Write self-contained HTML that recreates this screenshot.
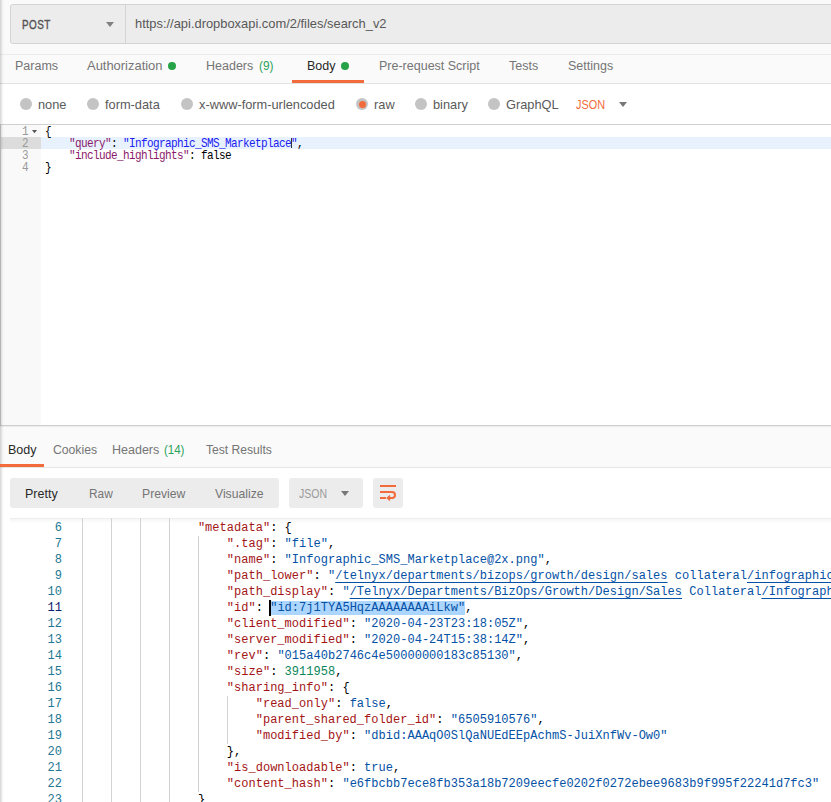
<!DOCTYPE html>
<html><head><meta charset="utf-8">
<style>
*{margin:0;padding:0;box-sizing:border-box}
html,body{width:831px;height:802px;overflow:hidden;background:#fafafa}
body{position:relative;font-family:"Liberation Sans",sans-serif;font-size:12.5px;color:#757575}
.a{position:absolute;white-space:pre}
.t{position:absolute;white-space:pre;line-height:16px;height:16px}
.strip{position:absolute;left:0;top:0;width:5px;height:802px;background:linear-gradient(90deg,rgba(0,0,0,.14) 0.5px,rgba(0,0,0,.085) 1.5px,rgba(0,0,0,.04) 2.5px,rgba(0,0,0,.012) 3.5px,rgba(0,0,0,0) 4.5px)}
.hl{position:absolute;height:1px}
.dot{position:absolute;width:8px;height:8px;border-radius:50%;background:#26a347}
.radio{position:absolute;width:12px;height:12px;border-radius:50%;background:#c4c4c4;top:98.3px}
.tri{position:absolute;width:0;height:0;border-left:4px solid transparent;border-right:4px solid transparent;border-top:5px solid #777}
.code{font-family:"Liberation Mono",monospace}
.req{position:absolute;left:0;font-size:11px;letter-spacing:-0.6px;line-height:12px;height:12px;white-space:pre;margin-top:1px;transform:scaleY(1.13);transform-origin:0 9.5px}
.rs{position:absolute;font-family:"Liberation Mono",monospace;font-size:12px;line-height:16px;height:16px;white-space:pre;color:#000}
.k{color:#a31515}.s{color:#0451a5}.n{color:#098658}.b{color:#0451a5}
.ln{position:absolute;font-family:"Liberation Mono",monospace;font-size:12px;line-height:16px;height:16px;width:52px;text-align:right;color:#237893}
.g{position:absolute;width:1px;background:#d3d3d3}
.u{text-decoration:underline;text-underline-offset:2.5px}
.sel{background:#add6ff}
.act{color:#0b216f}
.rs{letter-spacing:0.024px}
</style></head><body>
<!-- top url bar -->
<div class="a" style="left:10px;top:4px;width:830px;height:40px;border:1px solid #d4d4d4;border-radius:3px;background:#ececec"></div>
<div class="a" style="left:125px;top:5px;width:1px;height:38px;background:#d4d4d4"></div>
<div class="a" style="left:22px;top:17px;color:#555;font-size:12.4px;line-height:16px;letter-spacing:0.6px;-webkit-text-stroke:0.4px #555;transform:scaleX(0.8);transform-origin:0 0">POST</div>
<div class="tri" style="left:106px;top:22px;border-top-color:#808080"></div>
<div class="a" style="left:135px;top:16px;color:#585858;font-size:12.9px;line-height:16px">https://api.dropboxapi.com/2/files/search_v2</div>
<div class="hl" style="left:0;top:54px;width:831px;background:#ebebeb"></div>
<!-- tabs -->
<div class="a" style="left:15px;top:58px;line-height:16px">Params</div>
<div class="a" style="left:87px;top:58px;line-height:16px;font-size:12.95px">Authorization</div>
<div class="dot" style="left:168px;top:62px"></div>
<div class="a" style="left:206px;top:58px;line-height:16px">Headers</div><div class="a" style="left:258.5px;top:58px;line-height:16px;color:#2ba35a;transform:scaleX(0.95);transform-origin:0 0">(9)</div>
<div class="a" style="left:307px;top:58px;line-height:16px;color:#282828">Body</div>
<div class="dot" style="left:341px;top:62px"></div>
<div class="a" style="left:379px;top:58px;line-height:16px">Pre-request Script</div>
<div class="a" style="left:509px;top:58px;line-height:16px">Tests</div>
<div class="a" style="left:568px;top:58px;line-height:16px">Settings</div>
<div class="a" style="left:292px;top:80px;width:72px;height:3px;background:#f26b3a"></div>
<div class="hl" style="left:0;top:83px;width:831px;background:#e2e2e2"></div>
<!-- radios row -->
<div class="a" style="left:0;top:84px;width:831px;height:40px;background:#fff"></div>
<div class="radio" style="left:20px"></div><div class="a" style="left:38px;top:97px;line-height:16px;color:#5a5a5a;font-size:12.8px">none</div>
<div class="radio" style="left:87px"></div><div class="a" style="left:105px;top:97px;line-height:16px;color:#5a5a5a;font-size:12.8px">form-data</div>
<div class="radio" style="left:181px"></div><div class="a" style="left:199px;top:97px;line-height:16px;color:#5a5a5a;font-size:12.8px">x-www-form-urlencoded</div>
<div class="radio" style="left:356px"></div><div class="a" style="left:362px;top:104px"></div>
<div class="a" style="left:359px;top:101.2px;width:7px;height:7px;border-radius:50%;background:#f26b3a"></div>
<div class="a" style="left:374px;top:97px;line-height:16px;color:#5a5a5a;font-size:12.8px">raw</div>
<div class="radio" style="left:415px"></div><div class="a" style="left:433px;top:97px;line-height:16px;color:#5a5a5a;font-size:12.8px">binary</div>
<div class="radio" style="left:488px"></div><div class="a" style="left:506px;top:97px;line-height:16px;color:#5a5a5a;font-size:12.8px">GraphQL</div>
<div class="a" style="left:576px;top:97px;line-height:16px;color:#f26b3a;transform:scaleX(0.87);transform-origin:0 0">JSON</div>
<div class="tri" style="left:619px;top:102px"></div>
<!-- request editor -->
<div class="hl" style="left:0;top:124px;width:831px;background:#d0d0d0"></div>
<div class="a" style="left:0;top:125px;width:831px;height:300px;background:#fff"></div>
<div class="a" style="left:0;top:125px;width:41px;height:300px;background:#f9f9f9"></div>
<div class="a" style="left:41px;top:137px;width:790px;height:12px;background:#e8f2fe"></div>
<div class="a" style="left:1px;top:137px;width:40px;height:12px;background:#dcdcdc"></div>
<div class="req code" style="top:125px;left:0;width:28px;text-align:right;color:#999">1</div>
<svg class="a" style="left:31px;top:129px" width="8" height="6"><polygon points="1,1 6,1 3.5,4.2" fill="#555"/></svg>
<div class="req code" style="top:137px;left:0;width:28px;text-align:right;color:#999">2</div>
<div class="req code" style="top:149px;left:0;width:28px;text-align:right;color:#999">3</div>
<div class="req code" style="top:161px;left:0;width:28px;text-align:right;color:#999">4</div>
<div class="req code" style="top:125px;left:45px;color:#000">{</div>
<div class="req code" style="top:137px;left:45px;color:#000">    <span style="color:#8b1a6b">"query"</span>: <span style="color:#2020f0">"Infographic_SMS_Marketplace"</span>,</div>
<div class="req code" style="top:149px;left:45px;color:#000">    <span style="color:#8b1a6b">"include_highlights"</span>: false</div>
<div class="req code" style="top:161px;left:45px;color:#000">}</div>
<div class="a" style="left:291px;top:138px;width:1px;height:10px;background:#333"></div>
<div class="hl" style="left:0;top:425px;width:831px;background:#cfcfcf"></div>
<div class="hl" style="left:0;top:426px;width:831px;background:#ececec"></div>
<!-- response tabs -->
<div class="a" style="left:8px;top:442px;line-height:16px;color:#282828">Body</div>
<div class="a" style="left:53px;top:442px;line-height:16px;font-size:12.2px">Cookies</div>
<div class="a" style="left:112px;top:442px;line-height:16px">Headers</div><div class="a" style="left:164px;top:442px;line-height:16px;color:#2ba35a;transform:scaleX(0.92);transform-origin:0 0">(14)</div>
<div class="a" style="left:206px;top:442px;line-height:16px;font-size:12.1px">Test Results</div>

<div class="hl" style="left:0;top:467px;width:831px;background:#e6e6e6"></div>
<div class="a" style="left:0;top:468px;width:831px;height:334px;background:#fff"></div>
<!-- response toolbar -->
<div class="a" style="left:10px;top:478px;width:269px;height:30px;border-radius:3px;background:#ececec"></div>
<div class="a" style="left:25px;top:486px;line-height:16px;color:#282828">Pretty</div>
<div class="a" style="left:88.5px;top:486px;line-height:16px;transform:scaleX(0.95);transform-origin:0 0">Raw</div>
<div class="a" style="left:142px;top:486px;line-height:16px;font-size:12.2px">Preview</div>
<div class="a" style="left:215px;top:486px;line-height:16px;font-size:12.2px">Visualize</div>
<div class="a" style="left:289px;top:478px;width:74px;height:30px;border-radius:3px;background:#ececec"></div>
<div class="a" style="left:299px;top:486px;line-height:16px;color:#9a9a9a;transform:scaleX(0.84);transform-origin:0 0">JSON</div>
<div class="tri" style="left:341px;top:491px"></div>
<div class="a" style="left:373px;top:478px;width:30px;height:30px;border-radius:3px;background:#ececec"></div>
<svg class="a" style="left:373px;top:478px" width="30" height="30" viewBox="0 0 30 30"><g fill="none" stroke="#f26b3a" stroke-width="2"><path d="M7 8h16M7 14h12a3 3 0 0 1 0 6h-4M7 20h6"/><path d="M17 17.5l-2.5 2.5 2.5 2.5" stroke-width="1.6"/></g></svg>
<!-- response content -->
<div class="hl" style="left:10px;top:518px;width:821px;background:#eeeeee"></div>
<div class="a" style="left:10px;top:519px;width:821px;height:4px;background:linear-gradient(#f6f6f6,#fefefe)"></div>
<div id="resp"><div class="g" style="left:82.3px;top:518.0px;height:289.5px"></div>
<div class="g" style="left:111.2px;top:518.0px;height:289.5px"></div>
<div class="g" style="left:140.1px;top:518.0px;height:289.5px"></div>
<div class="g" style="left:169.0px;top:518.0px;height:289.5px"></div>
<div class="g" style="left:197.9px;top:535.5px;height:256px"></div>
<div class="g" style="left:226.8px;top:695.5px;height:48px"></div>
<div class="ln" style="left:10px;top:519.5px">6</div>
<div class="rs" style="left:197.9px;top:519.5px"><span class="k">"metadata"</span>: {</div>
<div class="ln" style="left:10px;top:535.5px">7</div>
<div class="rs" style="left:226.8px;top:535.5px"><span class="k">".tag"</span>: <span class="s">"file"</span>,</div>
<div class="ln" style="left:10px;top:551.5px">8</div>
<div class="rs" style="left:226.8px;top:551.5px"><span class="k">"name"</span>: <span class="s">"Infographic_SMS_Marketplace@2x.png"</span>,</div>
<div class="ln" style="left:10px;top:567.5px">9</div>
<div class="rs" style="left:226.8px;top:567.5px"><span class="k">"path_lower"</span>: <span class="s">"<span class="u">/telnyx/departments/bizops/growth/design/sales</span> collateral<span class="u">/infographics/sms_marketplace</span>"</span></div>
<div class="ln" style="left:10px;top:583.5px">10</div>
<div class="rs" style="left:226.8px;top:583.5px"><span class="k">"path_display"</span>: <span class="s">"<span class="u">/Telnyx/Departments/BizOps/Growth/Design/Sales</span> Collateral<span class="u">/Infographics/SMS_Marketplace</span>"</span></div>
<div class="ln act" style="left:10px;top:599.5px">11</div>
<div class="rs" style="left:226.8px;top:599.5px"><span class="k">"id"</span>: <span class="sel"><span class="s">"id:7j1TYA5HqzAAAAAAAAiLkw"</span></span>,</div>
<div class="ln" style="left:10px;top:615.5px">12</div>
<div class="rs" style="left:226.8px;top:615.5px"><span class="k">"client_modified"</span>: <span class="s">"2020-04-23T23:18:05Z"</span>,</div>
<div class="ln" style="left:10px;top:631.5px">13</div>
<div class="rs" style="left:226.8px;top:631.5px"><span class="k">"server_modified"</span>: <span class="s">"2020-04-24T15:38:14Z"</span>,</div>
<div class="ln" style="left:10px;top:647.5px">14</div>
<div class="rs" style="left:226.8px;top:647.5px"><span class="k">"rev"</span>: <span class="s">"015a40b2746c4e50000000183c85130"</span>,</div>
<div class="ln" style="left:10px;top:663.5px">15</div>
<div class="rs" style="left:226.8px;top:663.5px"><span class="k">"size"</span>: <span class="n">3911958</span>,</div>
<div class="ln" style="left:10px;top:679.5px">16</div>
<div class="rs" style="left:226.8px;top:679.5px"><span class="k">"sharing_info"</span>: {</div>
<div class="ln" style="left:10px;top:695.5px">17</div>
<div class="rs" style="left:255.7px;top:695.5px"><span class="k">"read_only"</span>: <span class="s">false</span>,</div>
<div class="ln" style="left:10px;top:711.5px">18</div>
<div class="rs" style="left:255.7px;top:711.5px"><span class="k">"parent_shared_folder_id"</span>: <span class="s">"6505910576"</span>,</div>
<div class="ln" style="left:10px;top:727.5px">19</div>
<div class="rs" style="left:255.7px;top:727.5px"><span class="k">"modified_by"</span>: <span class="s">"dbid:AAAqO0SlQaNUEdEEpAchmS-JuiXnfWv-Ow0"</span></div>
<div class="ln" style="left:10px;top:743.5px">20</div>
<div class="rs" style="left:226.8px;top:743.5px">},</div>
<div class="ln" style="left:10px;top:759.5px">21</div>
<div class="rs" style="left:226.8px;top:759.5px"><span class="k">"is_downloadable"</span>: <span class="s">true</span>,</div>
<div class="ln" style="left:10px;top:775.5px">22</div>
<div class="rs" style="left:226.8px;top:775.5px"><span class="k">"content_hash"</span>: <span class="s">"e6fbcbb7ece8fb353a18b7209eecfe0202f0272ebee9683b9f995f22241d7fc3"</span></div>
<div class="ln" style="left:10px;top:791.5px">23</div>
<div class="rs" style="left:197.9px;top:791.5px">}</div><div class="a" style="left:269px;top:599.5px;width:2px;height:16px;background:#000"></div></div><!--/resp-->
<div class="a" style="left:0;top:125px;width:1px;height:300px;background:#d0d0d0"></div>
<div class="strip"></div>
<div class="a" style="left:0;top:464px;width:44px;height:3px;background:#f26b3a"></div>
</body></html>
